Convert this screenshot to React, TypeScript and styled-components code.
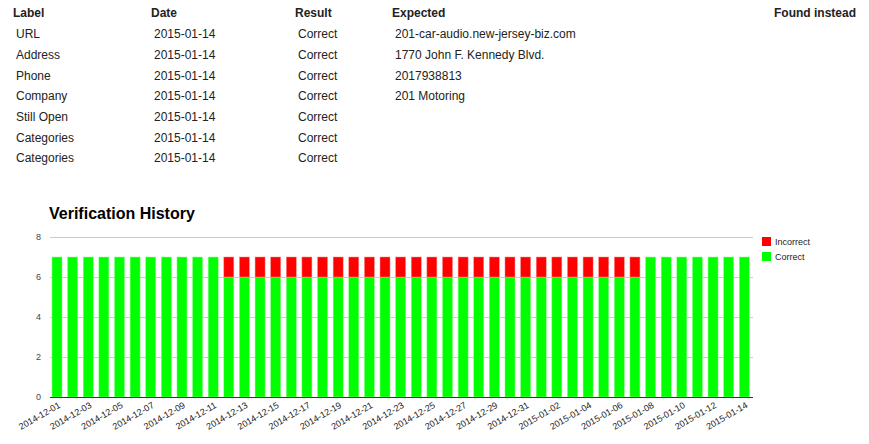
import React from "react";
import styled, { createGlobalStyle } from "styled-components";

const Global = createGlobalStyle`
  body { margin: 0; background: #fff; font-family: Arial, "Liberation Sans", sans-serif; color: #222; }
`;
const Page = styled.div`padding: 4px 8px 0 8px;`;
const Table = styled.table`
  width: 853px; border-collapse: collapse; font-size: 12px; table-layout: fixed;
`;
const Th = styled.th<{ $w?: number; $right?: boolean }>`
  text-align: ${p => (p.$right ? "right" : "left")};
  font-weight: bold; padding: 1px 5px 3px 5px; height: 16px;
  width: ${p => (p.$w ? p.$w + "px" : "auto")};
`;
const Td = styled.td`padding: 2px 5px 2px 8px; height: 16.7px; white-space: nowrap;`;
const Title = styled.h2`
  font-size: 16px; font-weight: bold; margin: 36px 0 0 41px; color: #000; line-height: 18px;
`;
const Svg = styled.svg`display: block; margin: 2px 0 0 -8px;`;

const rows = [
  ["URL", "201-car-audio.new-jersey-biz.com"],
  ["Address", "1770 John F. Kennedy Blvd."],
  ["Phone", "2017938813"],
  ["Company", "201 Motoring"],
  ["Still Open", ""],
  ["Categories", ""],
  ["Categories", ""],
];

const dates: string[] = [];
for (let i = 0; i < 45; i++) {
  const d = new Date(Date.UTC(2014, 11, 1 + i));
  dates.push(d.toISOString().slice(0, 10));
}

const base = 172, unit = 20, x0 = 52, step = 15.62, bw = 10;

export default function App() {
  return (
    <Page>
      <Global />
      <Table>
        <thead>
          <tr>
            <Th $w={128}>Label</Th>
            <Th $w={134}>Date</Th>
            <Th $w={87}>Result</Th>
            <Th>Expected</Th>
            <Th $w={110} $right>Found instead</Th>
          </tr>
        </thead>
        <tbody>
          {rows.map((r, i) => (
            <tr key={i}>
              <Td>{r[0]}</Td>
              <Td>2015-01-14</Td>
              <Td>Correct</Td>
              <Td>{r[1]}</Td>
              <Td></Td>
            </tr>
          ))}
        </tbody>
      </Table>
      <Title>Verification History</Title>
      <Svg width={869} height={217} viewBox="0 0 869 217">
        {[2, 4, 6, 8].map(v => (
          <line key={v} x1={50} x2={753} y1={base - v * unit + 0.5} y2={base - v * unit + 0.5} stroke="#ccc" />
        ))}
        {[0, 2, 4, 6, 8].map(v => (
          <text key={v} x={41} y={base - v * unit + 3} fontSize={9} textAnchor="end" fill="#444" fontFamily="Arial, 'Liberation Sans', sans-serif">{v}</text>
        ))}
        {dates.map((d, i) => {
          const x = x0 + i * step;
          const red = i >= 11 && i <= 37;
          return (
            <g key={d}>
              <rect x={x} y={base - (red ? 6 : 7) * unit} width={bw} height={(red ? 6 : 7) * unit} fill="#00ff00" stroke="#8f8" strokeWidth={0.5} />
              {red && <rect x={x} y={base - 7 * unit} width={bw} height={unit} fill="#ff0000" stroke="#f88" strokeWidth={0.5} />}
            </g>
          );
        })}
        <line x1={50} x2={753} y1={base + 0.5} y2={base + 0.5} stroke="#333" />
        {dates.map((d, i) =>
          i % 2 === 0 ? (
            <text key={d} transform={`translate(${x0 + i * step + 9},${base + 10}) rotate(-30)`} fontSize={9} textAnchor="end" fill="#222" fontFamily="Arial, 'Liberation Sans', sans-serif">{d}</text>
          ) : null
        )}
        <rect x={762} y={12} width={9} height={9} fill="#ff0000" />
        <text x={775} y={20} fontSize={9} fill="#222" fontFamily="Arial, 'Liberation Sans', sans-serif">Incorrect</text>
        <rect x={762} y={27} width={9} height={9} fill="#00ff00" />
        <text x={775} y={35} fontSize={9} fill="#222" fontFamily="Arial, 'Liberation Sans', sans-serif">Correct</text>
      </Svg>
    </Page>
  );
}
